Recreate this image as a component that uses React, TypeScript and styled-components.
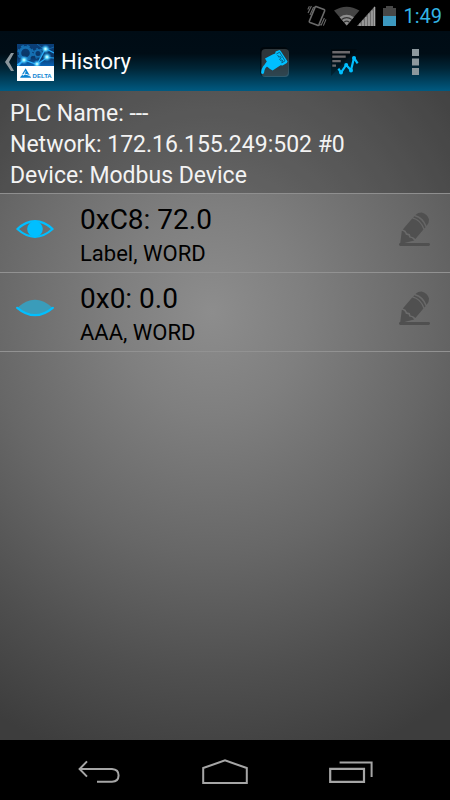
import React from "react";
import styled, { createGlobalStyle } from "styled-components";

const GlobalStyle = createGlobalStyle`
  * { box-sizing: border-box; }
  body { margin: 0; background: #000; font-family: Roboto, "Noto Sans", sans-serif; }
  svg { display: block; flex: none; }
`;

const Screen = styled.div`
  display: flex;
  flex-direction: column;
  min-height: 100vh;
`;

const StatusBar = styled.div`
  display: flex;
  align-items: center;
  justify-content: flex-end;
  height: 31px;
  padding-right: 8px;
  gap: 7px;
  background: #000;
`;

const Clock = styled.time`
  font-size: 20px;
  line-height: 24px;
  color: #33b5e5;
`;

const ActionBar = styled.header`
  display: flex;
  align-items: center;
  height: 60px;
  padding-top: 2px;
  background: linear-gradient(#000c15 0%, #000d16 38%, #002536 62%, #005a81 100%);
`;

const PlainButton = styled.button`
  display: flex;
  align-items: center;
  justify-content: center;
  padding: 0;
  border: 0;
  background: none;
`;

const UpButton = styled(PlainButton)`
  gap: 3px;
  padding-left: 5px;
`;

const Title = styled.h1`
  flex: 1;
  margin: 0 0 0 7px;
  font-size: 22px;
  line-height: 28px;
  font-weight: 400;
  color: #fff;
`;

const ActionButton = styled(PlainButton)`
  width: 70px;
  height: 58px;
`;

const Content = styled.main`
  flex: 1;
  background: radial-gradient(ellipse 95% 72% at 47% 34%, #8d8d8d 0%, #7f7f7f 22%, #676767 52%, #4f4f4f 78%, #3d3d3d 100%);
`;

const DeviceInfo = styled.section`
  padding: 7px 10px 2px;
  border-bottom: 1px solid #8f8f8f;
  background: rgba(0, 0, 0, 0.2);
`;

const InfoLine = styled.p`
  margin: 0;
  font-size: 23px;
  line-height: 31px;
  color: #f3f3f3;
`;

const TagList = styled.ul`
  margin: 0;
  padding: 0;
  list-style: none;
`;

const TagRow = styled.li`
  display: flex;
  align-items: flex-start;
  border-bottom: 1px solid #929292;
`;

const RowButton = styled(PlainButton)`
  width: 70px;
  height: 70px;
`;

const TagText = styled.div`
  flex: 1;
  padding: 8px 10px 2px;
  color: #000;
`;

const TagValue = styled.div`
  font-size: 28px;
  line-height: 35px;
`;

const TagKind = styled.div`
  font-size: 22px;
  line-height: 33px;
`;

const NavBar = styled.nav`
  display: flex;
  height: 60px;
  padding: 4px 8% 0;
  background: #000;
`;

const NavButton = styled(PlainButton)`
  flex: 1;
`;

const VibrateIcon = () => (
  <svg width="20" height="24" viewBox="0 0 20 24" fill="none" stroke="#6a6a6a" aria-hidden="true">
    <path d="M9 2.6 17 5.4Q18 6 17.6 7L12 20.6Q11.5 21.6 10.5 21.2L3 18.4Q2 18 2.4 17L8 3.4Q8.3 2.4 9 2.6Z" strokeWidth="1.6" />
    <path d="M1 9 4.4 2M3 11 6.6 3M.8 5.4 2.4 2.2M14 21.4 17.4 14M16.4 21.6 19 15.4M12.6 21.6 13.2 20" strokeWidth="1.1" />
  </svg>
);

const SignalIcons = () => (
  <svg width="42" height="20" viewBox="0 0 42 20" aria-hidden="true">
    <path d="M0 4.6Q12.7-3 25.4 4.6L12.7 19.4Z" fill="#444" />
    <path d="M5.6 11.2Q12.7 6.4 19.8 11.2L12.7 19.4Z" fill="#8c8c8c" />
    <path d="M7.6 13.4Q12.7 9.8 17.8 13.4M10 16.2Q12.7 14.2 15.4 16.2" stroke="#333" strokeWidth="1.2" fill="none" />
    <path d="M23 20 41 0V20Z" fill="#6c6c6c" />
    <path d="M26 20V17.4M29 20V14.2M32 20V11M35 20V7.6M38 20V4.4M40.6 20V1" stroke="#a6a6a6" strokeWidth="1.4" />
  </svg>
);

const BatteryIcon = () => (
  <svg width="13" height="20" viewBox="0 0 13 20" aria-hidden="true">
    <path d="M3 0H10V2H13V10H0V2H3Z" fill="#474747" />
    <path d="M0 10H13V20H0Z" fill="#3c98bf" />
  </svg>
);

const ChevronIcon = () => (
  <svg width="9" height="18" viewBox="0 0 9 18" aria-hidden="true">
    <path d="M6 0H9L4 9 9 18H6L0 9Z" fill="#8a969c" />
  </svg>
);

const LogoIcon = () => (
  <svg width="37" height="37" viewBox="0 0 37 37" role="img" aria-label="Delta">
    <defs>
      <linearGradient id="sky" x1="0" y1="0" x2="0" y2="1">
        <stop offset="0" stopColor="#0a3f78" />
        <stop offset=".6" stopColor="#0b3564" />
        <stop offset="1" stopColor="#0864b8" />
      </linearGradient>
      <radialGradient id="spark">
        <stop offset="0" stopColor="#fff" />
        <stop offset=".3" stopColor="#6fe4ff" />
        <stop offset="1" stopColor="#0a8cf5" stopOpacity="0" />
      </radialGradient>
    </defs>
    <path d="M0 0H37V22H0Z" fill="url(#sky)" />
    <g fill="none" stroke="#1670b2">
      <circle cx="8.5" cy="9" r="5.6" strokeWidth="2.6" />
      <circle cx="8.5" cy="9" r="7.4" strokeWidth="1.6" strokeDasharray="3 3" />
      <circle cx="21" cy="9.4" r="3.4" strokeWidth="1.8" />
      <circle cx="21" cy="9.4" r="4.8" strokeWidth="1.2" strokeDasharray="2 2" />
      <path d="M20 0Q28 8 37 3" strokeWidth=".8" />
    </g>
    <path d="M0 21 7 16 20 20.5 30 13.5 37 14M20 20.5 28.5 4.5 37 9M7 16 1 22" fill="none" stroke="#29aefb" strokeWidth="1.2" />
    <circle cx="7" cy="16" r="4.8" fill="url(#spark)" />
    <circle cx="20" cy="20" r="4.2" fill="url(#spark)" />
    <circle cx="30" cy="13" r="4.8" fill="url(#spark)" />
    <circle cx="28.5" cy="5" r="4.8" fill="url(#spark)" />
    <path d="M0 22H37V37H0Z" fill="#fff" />
    <path d="M8.6 24.2 14.2 33.8H3Z" fill="#0b83d2" />
    <path d="M3.4 31.6Q8 28.6 13.6 32.2M8.4 27.4 6.4 31.6" stroke="#fff" strokeWidth=".9" fill="none" />
    <text x="15.6" y="33.8" fontFamily="Liberation Sans, sans-serif" fontSize="6" fontWeight="700" fill="#0b83d2">DELTA</text>
  </svg>
);

const PlugIcon = () => (
  <svg width="30" height="30" viewBox="0 0 30 30" aria-hidden="true">
    <rect x="0" y="0" width="28" height="29" rx="4" fill="#000" fillOpacity=".45" />
    <rect x="1.5" y="2" width="27.5" height="28" rx="4" fill="#a9b4ba" fillOpacity=".27" />
    <path d="M2.6 25.4Q3 19.4 8 17.4" fill="none" stroke="#00bfff" strokeWidth="3" strokeLinecap="round" />
    <path d="M5 11.4 12.6 7.4 15.2 6.4 15.6 4.6 19.8 3 21 4.4 27.6 14.6 26.8 16 22.6 18.4 20.6 18.2 12.6 23.6 10 22 4.6 17.6 6.8 14.6Z" fill="#00bfff" />
    <path d="M16.4 7 19.6 5.2 25 13.8 21.8 16M17.6 8 18.8 10.2 20.4 9.4 21.2 11 19.6 12 20.6 13.6 22 12.8 22.8 14.2 21 15.4" fill="none" stroke="#0a4e6c" strokeWidth=".8" />
  </svg>
);

const HistoryChartIcon = () => (
  <svg width="28" height="28" viewBox="0 0 28 28" aria-hidden="true">
    <path d="M0 1H26L0 28Z" fill="#000" fillOpacity=".3" />
    <path d="M1.3 3H19V5.4H1.3ZM1.3 7.4H14.7V9.8H1.3ZM1.3 12H9.7V14.2H1.3ZM1.3 16.4H5V18.8H1.3Z" fill="#6b696c" />
    <path d="M7.4 20.6 10 24.6 15.2 17 20 22.2 23 9.8 26.6 15.4" fill="none" stroke="#00bfff" strokeWidth="2.2" strokeLinejoin="round" />
    <g fill="#00bfff">
      <circle cx="10" cy="24.4" r="2" />
      <circle cx="15.2" cy="17" r="2" />
      <circle cx="20" cy="22.4" r="2" />
      <circle cx="23" cy="10" r="2" />
    </g>
  </svg>
);

const OverflowIcon = () => (
  <svg width="7" height="26" viewBox="0 0 7 26" fill="#8c989d" aria-hidden="true">
    <path d="M0 0H7V7H0ZM0 9.5H7V16.5H0ZM0 19H7V26H0Z" />
  </svg>
);

const EyeOpenIcon = () => (
  <svg width="38" height="18" viewBox="0 0 38 18" aria-hidden="true">
    <path d="M1.4 9Q10 1.2 19 1.2T36.6 9Q28 16.8 19 16.8T1.4 9Z" fill="none" stroke="#00bfff" strokeWidth="2.2" strokeLinejoin="round" />
    <circle cx="19" cy="9" r="7.8" fill="#00bfff" />
  </svg>
);

const EyeClosedIcon = () => (
  <svg width="38" height="18" viewBox="0 0 38 18" aria-hidden="true">
    <path d="M1.4 8.8Q10 .8 19 .8T36.6 8.8Q28 16.2 19 16.2T1.4 8.8Z" fill="#3a9cba" />
    <path d="M1.2 8.8Q10 16.2 19 16.2T36.8 8.8" fill="none" stroke="#00bfff" strokeWidth="2.2" strokeLinecap="round" />
  </svg>
);

const PencilIcon = () => (
  <svg width="32" height="36" viewBox="0 0 32 36" fill="#505050" aria-hidden="true">
    <rect x="0" y="32" width="31" height="3" rx="1.4" />
    <path d="M2.8 19.8Q6.2 20.6 6.8 23.8L9.6 24.4 10.2 26.6Q13.6 26.8 15.2 29.6L3.4 32.4 1.2 32.8Z" />
    <path d="M3.8 18.6 13.2 7.6Q21 9 24.4 18.6L16.4 28Q14.4 25.6 11.6 25.4L10.8 23 8 22.2Q7.2 19.4 3.8 18.6Z" />
    <path d="M14.2 6.4 15.2 5.2Q23.4 7.4 26.6 16.2L25.4 17.6Q22 8.4 14.2 6.4Z" />
    <path d="M16.4 4Q19 1.6 22.6 1.6 28.4 3 30 8.6 30.2 12.4 27.6 15Q24.4 6.2 16.4 4Z" />
  </svg>
);

const BackIcon = () => (
  <svg width="42" height="24" viewBox="0 0 42 24" fill="none" stroke="#a6a6a6" strokeWidth="2" aria-hidden="true">
    <path d="M9 1.4 1.6 9 9 16.6M2 9H34Q40.6 9.4 40.6 15.4 40.4 21.6 34 21.8H19" />
  </svg>
);

const HomeIcon = () => (
  <svg width="46" height="26" viewBox="0 0 46 26" fill="none" stroke="#a6a6a6" strokeWidth="2" aria-hidden="true">
    <path d="M1.2 24V9L23 1.4 44.8 9V24Z" />
  </svg>
);

const RecentsIcon = () => (
  <svg width="44" height="24" viewBox="0 0 44 24" fill="none" stroke="#a6a6a6" aria-hidden="true">
    <path d="M1.2 8.8H35V21.8H1.2Z" strokeWidth="2.2" />
    <path d="M10.6 2.6H42.6V17" strokeWidth="2" />
  </svg>
);

const tags = [
  { value: "0xC8: 72.0", kind: "Label, WORD", visible: true },
  { value: "0x0: 0.0", kind: "AAA, WORD", visible: false },
];

export default function App() {
  return (
    <Screen>
      <GlobalStyle />
      <StatusBar>
        <VibrateIcon />
        <SignalIcons />
        <BatteryIcon />
        <Clock>1:49</Clock>
      </StatusBar>
      <ActionBar>
        <UpButton aria-label="Navigate up">
          <ChevronIcon />
          <LogoIcon />
        </UpButton>
        <Title>History</Title>
        <ActionButton aria-label="Connection"><PlugIcon /></ActionButton>
        <ActionButton aria-label="History chart"><HistoryChartIcon /></ActionButton>
        <ActionButton aria-label="More options"><OverflowIcon /></ActionButton>
      </ActionBar>
      <Content>
        <DeviceInfo>
          <InfoLine>PLC Name: ---</InfoLine>
          <InfoLine>Network: 172.16.155.249:502 #0</InfoLine>
          <InfoLine>Device: Modbus Device</InfoLine>
        </DeviceInfo>
        <TagList>
          {tags.map((tag) => (
            <TagRow key={tag.value}>
              <RowButton aria-label="Toggle visibility" aria-pressed={tag.visible}>
                {tag.visible ? <EyeOpenIcon /> : <EyeClosedIcon />}
              </RowButton>
              <TagText>
                <TagValue>{tag.value}</TagValue>
                <TagKind>{tag.kind}</TagKind>
              </TagText>
              <RowButton aria-label="Edit"><PencilIcon /></RowButton>
            </TagRow>
          ))}
        </TagList>
      </Content>
      <NavBar>
        <NavButton aria-label="Back"><BackIcon /></NavButton>
        <NavButton aria-label="Home"><HomeIcon /></NavButton>
        <NavButton aria-label="Recent apps"><RecentsIcon /></NavButton>
      </NavBar>
    </Screen>
  );
}
